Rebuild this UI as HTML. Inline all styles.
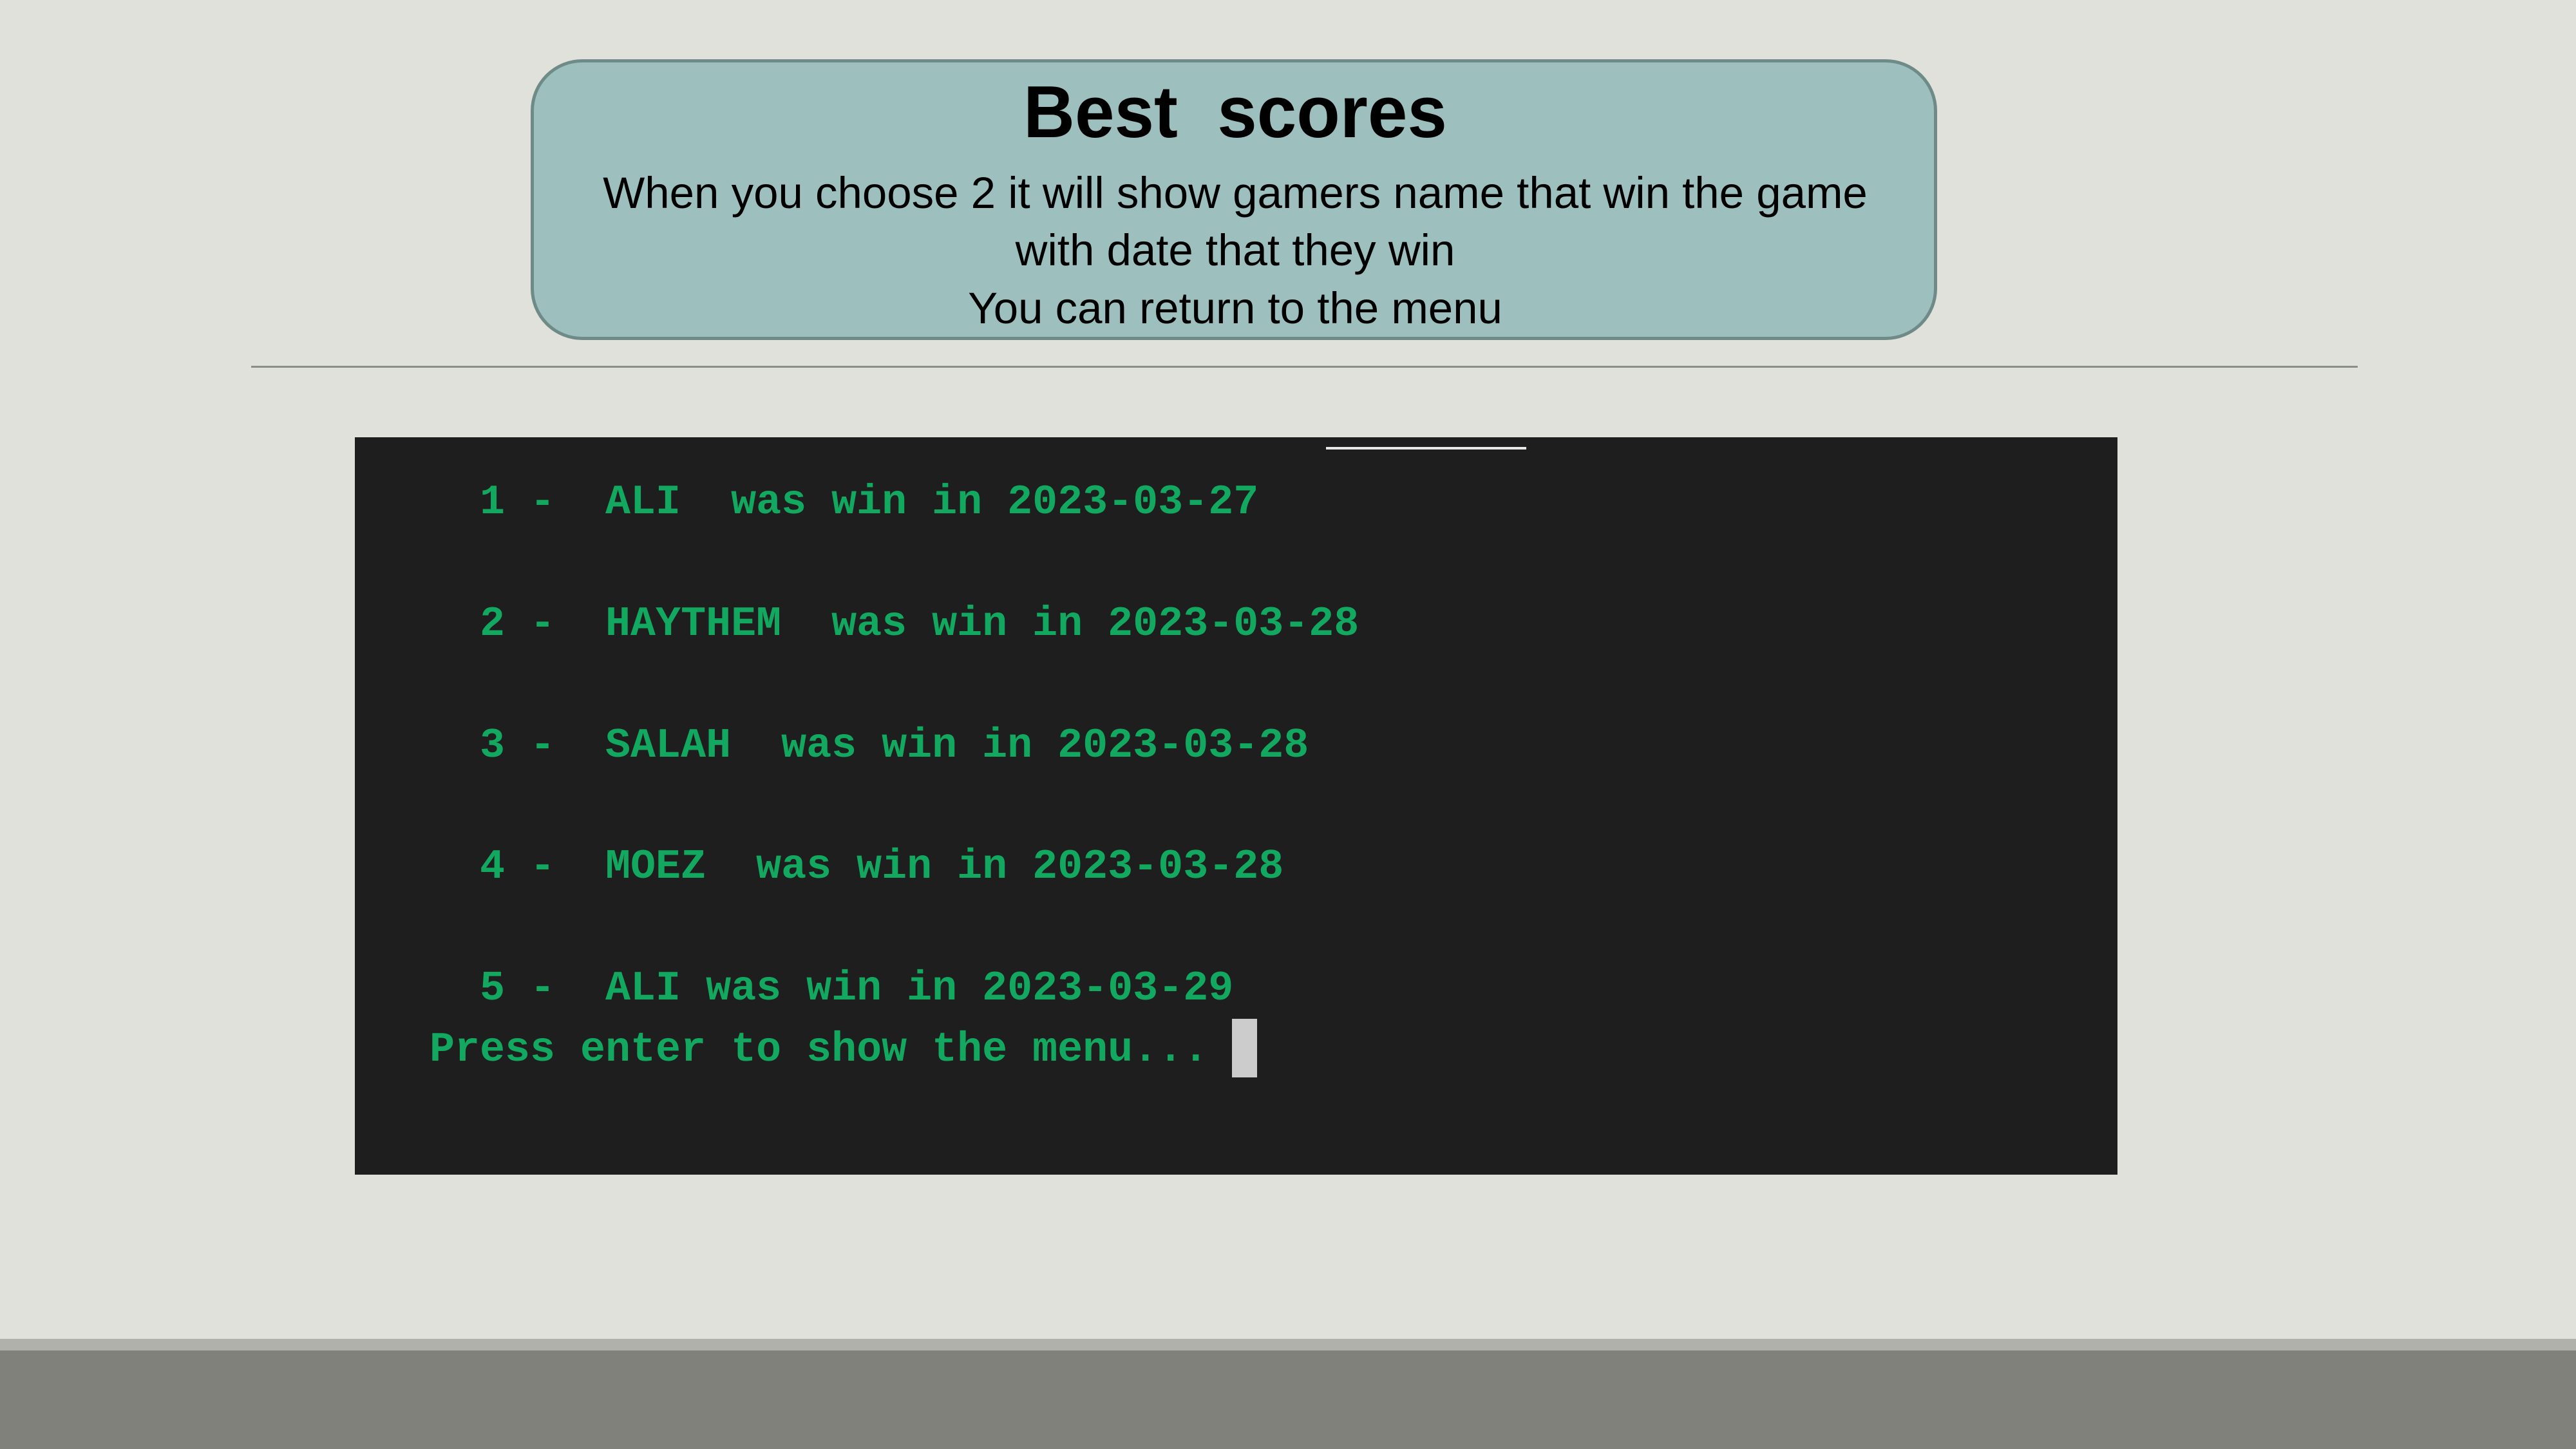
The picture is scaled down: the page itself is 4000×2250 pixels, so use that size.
<!DOCTYPE html>
<html><head><meta charset="utf-8"><style>
html,body{margin:0;padding:0}
body{width:4000px;height:2250px;background:#e0e1db;position:relative;overflow:hidden;font-family:"Liberation Sans",sans-serif}
.box{position:absolute;left:824px;top:92px;width:2184px;height:436px;background:#9dbfbe;border:5px solid #6f8b88;border-radius:80px;box-sizing:border-box}
.t{position:absolute;left:0;width:3836px;text-align:center;color:#000;white-space:nowrap}
.term{position:absolute;left:551px;top:679px;width:2737px;height:1145px;background:#1e1e1e}
.m{position:absolute;font-family:"Liberation Mono",monospace;font-size:65px;color:#13a860;white-space:pre;line-height:80px;font-weight:bold}
</style></head><body>
<div class="box"></div>
<div class="t" style="top:110px;font-size:114px;font-weight:bold;line-height:130px;transform:scaleX(0.97)">Best&nbsp; scores</div>
<div class="t" style="top:260px;font-size:69px;line-height:80px">When you choose 2 it will show gamers name that win the game</div>
<div class="t" style="top:349px;font-size:69px;line-height:80px">with date that they win</div>
<div class="t" style="top:439px;font-size:69px;line-height:80px">You can return to the menu</div>
<div style="position:absolute;left:390px;top:568px;width:3271px;height:3px;background:#8a8e88"></div>
<div class="term"></div>
<div style="position:absolute;left:2059px;top:694px;width:311px;height:4px;background:#e8e8e8"></div>
<div class="m" style="left:667px;top:740px">  1 -  ALI  was win in 2023-03-27</div>
<div class="m" style="left:667px;top:929px">  2 -  HAYTHEM  was win in 2023-03-28</div>
<div class="m" style="left:667px;top:1118px">  3 -  SALAH  was win in 2023-03-28</div>
<div class="m" style="left:667px;top:1306px">  4 -  MOEZ  was win in 2023-03-28</div>
<div class="m" style="left:667px;top:1495px">  5 -  ALI was win in 2023-03-29</div>
<div class="m" style="left:667px;top:1590px">Press enter to show the menu...</div>
<div style="position:absolute;left:1913px;top:1582px;width:39px;height:91px;background:#cccccc"></div>
<div style="position:absolute;left:0;top:2079px;width:4000px;height:18px;background:#b0b1aa"></div>
<div style="position:absolute;left:0;top:2097px;width:4000px;height:153px;background:#80817a"></div>
</body></html>
